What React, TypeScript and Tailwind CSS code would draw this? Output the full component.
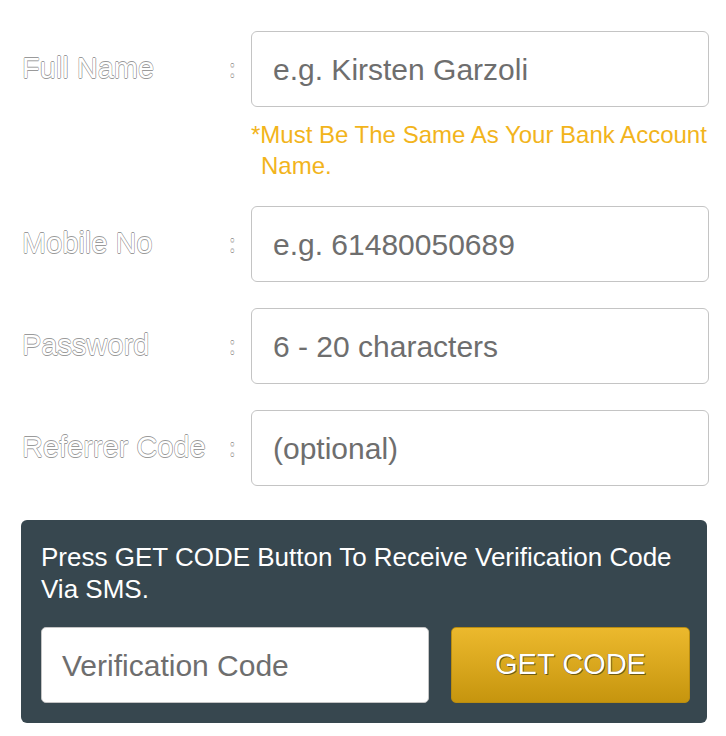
const labelStroke =
  "text-white [text-shadow:-0.6px_0_#9a9a9a,0.6px_0_#9a9a9a,0_0.6px_#9a9a9a,0_-0.6px_#9a9a9a]";

function Field({ label, placeholder }: { label: string; placeholder: string }) {
  return (
    <div className="flex items-center">
      <span className={`w-[229px] shrink-0 pl-[22px] text-[29px] ${labelStroke}`}>{label}</span>
      <span className={`w-[22px] shrink-0 text-[24px] ${labelStroke}`}>:</span>
      <div className="flex h-[76px] w-[458px] shrink-0 items-center rounded-[6px] border border-[#c4c4c4] bg-white px-[21px] text-[30px] text-[#6e6e6e]">
        {placeholder}
      </div>
    </div>
  );
}

export default function App() {
  return (
    <div className="w-[726px] bg-white pt-[31px] pb-[13px] [font-family:'Liberation_Sans',Arial,sans-serif]">
      <Field label="Full Name" placeholder="e.g. Kirsten Garzoli" />
      <p className="ml-[251px] mt-[12px] w-[460px] pl-[10px] -indent-[10px] text-[24px] leading-[31px] text-[#f2b41c]">
        *Must Be The Same As Your Bank Account Name.
      </p>

      <div className="mt-[25px] flex flex-col gap-[26px]">
        <Field label="Mobile No" placeholder="e.g. 61480050689" />
        <Field label="Password" placeholder="6 - 20 characters" />
        <Field label="Referrer Code" placeholder="(optional)" />
      </div>

      <div className="ml-[21px] mt-[34px] w-[686px] rounded-[6px] bg-[#37474f] pl-[20px] pr-[17px] pt-[21px] pb-[20px]">
        <p className="text-[26px] leading-[32px] text-white">
          Press GET CODE Button To Receive Verification Code Via SMS.
        </p>
        <div className="mt-[22px] flex gap-[22px]">
          <div className="flex h-[76px] w-[388px] items-center rounded-[5px] border border-[#c4c4c4] bg-white px-[20px] text-[30px] text-[#6e6e6e]">
            Verification Code
          </div>
          <button className="flex h-[76px] w-[239px] items-center justify-center rounded-[5px] border border-[#b98c10] bg-[linear-gradient(180deg,#ecb92d,#c6950e)] text-[29px] text-white [text-shadow:1px_1px_0_#6e5a12,-0.5px_-0.5px_0_#6e5a12]">
            GET CODE
          </button>
        </div>
      </div>
    </div>
  );
}
